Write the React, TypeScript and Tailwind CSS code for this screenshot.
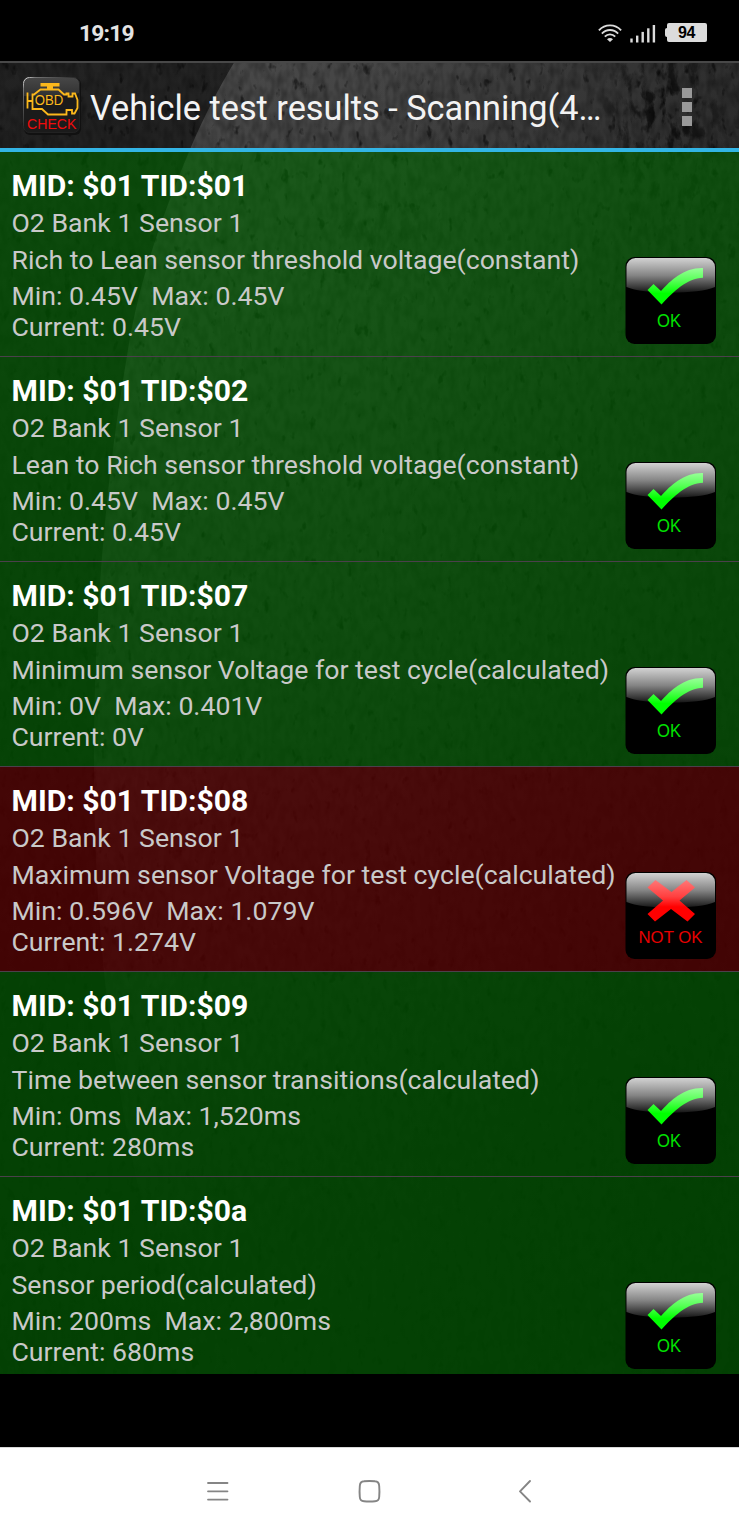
import React from "react";
import clsx from "clsx";

type TestResult = {
  tid: string;
  description: string;
  min: string;
  max: string;
  current: string;
  ok: boolean;
};

const results: TestResult[] = [
  { tid: "$01", description: "Rich to Lean sensor threshold voltage(constant)", min: "0.45V", max: "0.45V", current: "0.45V", ok: true },
  { tid: "$02", description: "Lean to Rich sensor threshold voltage(constant)", min: "0.45V", max: "0.45V", current: "0.45V", ok: true },
  { tid: "$07", description: "Minimum sensor Voltage for test cycle(calculated)", min: "0V", max: "0.401V", current: "0V", ok: true },
  { tid: "$08", description: "Maximum sensor Voltage for test cycle(calculated)", min: "0.596V", max: "1.079V", current: "1.274V", ok: false },
  { tid: "$09", description: "Time between sensor transitions(calculated)", min: "0ms", max: "1,520ms", current: "280ms", ok: true },
  { tid: "$0a", description: "Sensor period(calculated)", min: "200ms", max: "2,800ms", current: "680ms", ok: true },
];

// Worn metal wallpaper behind the action bar and the list
function Wallpaper() {
  return (
    <svg className="absolute inset-0 h-full w-full" viewBox="0 0 739 1313" preserveAspectRatio="none" aria-hidden="true">
      <defs>
        <linearGradient id="wall-dark" x1="0" y1="0" x2="0" y2="1">
          <stop offset="0" stopColor="#232323" />
          <stop offset="0.35" stopColor="#181818" />
          <stop offset="0.7" stopColor="#0d0d0d" />
          <stop offset="1" stopColor="#0b0b0b" />
        </linearGradient>
        <linearGradient id="wall-light" x1="0.2" y1="0" x2="0.35" y2="1">
          <stop offset="0" stopColor="#484848" />
          <stop offset="0.2" stopColor="#3c3c3c" />
          <stop offset="0.42" stopColor="#2a2a2a" />
          <stop offset="0.65" stopColor="#1a1a1a" />
          <stop offset="0.85" stopColor="#0f0f0f" />
          <stop offset="1" stopColor="#0c0c0c" />
        </linearGradient>
        <linearGradient id="wall-side" x1="0" y1="0" x2="1" y2="0">
          <stop offset="0.5" stopColor="#000" stopOpacity="0" />
          <stop offset="1" stopColor="#000" stopOpacity="0.3" />
        </linearGradient>
        <radialGradient id="wall-fade">
          <stop offset="0" stopColor="#fff" />
          <stop offset="1" stopColor="#fff" stopOpacity="0" />
        </radialGradient>
        <mask id="wall-patch">
          <ellipse cx="665" cy="50" rx="80" ry="120" fill="url(#wall-fade)" />
          <ellipse cx="690" cy="180" rx="110" ry="110" fill="url(#wall-fade)" opacity="0.4" />
          <ellipse cx="380" cy="170" rx="90" ry="90" fill="url(#wall-fade)" opacity="0.4" />
        </mask>
        <filter id="wall-specks" x="0" y="0" width="100%" height="100%">
          <feTurbulence type="fractalNoise" baseFrequency="0.11 0.065" numOctaves="3" seed="8" />
          <feColorMatrix values="0 0 0 0 0  0 0 0 0 0  0 0 0 0 0  6 0 0 0 -4" />
        </filter>
        <filter id="wall-grime" x="0" y="0" width="100%" height="100%">
          <feTurbulence type="fractalNoise" baseFrequency="0.09 0.05" numOctaves="4" seed="3" />
          <feColorMatrix values="0 0 0 0 0  0 0 0 0 0  0 0 0 0 0  5 0 0 0 -2.5" />
        </filter>
        <filter id="wall-grain" x="0" y="0" width="100%" height="100%">
          <feTurbulence type="fractalNoise" baseFrequency="0.14 0.07" numOctaves="2" seed="5" />
          <feColorMatrix values="0 0 0 0 0  0 0 0 0 0  0 0 0 0 0  1 0 0 0 -0.35" />
        </filter>
      </defs>
      <rect width="739" height="1313" fill="url(#wall-dark)" />
      <path
        d="M235 0C218 28 204 56 191 86C158 164 137 228 127 295C108 405 94 540 94 705C94 910 122 1110 190 1313H739V0Z"
        fill="url(#wall-light)"
      />
      <rect width="739" height="1313" fill="url(#wall-side)" />
      <rect width="739" height="1313" filter="url(#wall-grain)" opacity="0.6" />
      <rect width="739" height="1313" filter="url(#wall-specks)" opacity="0.5" />
      <g mask="url(#wall-patch)">
        <rect width="739" height="420" filter="url(#wall-grime)" opacity="0.8" />
      </g>
    </svg>
  );
}

function StatusBar() {
  return (
    <div className="flex h-[61px] items-center justify-between bg-black pt-[5px] pr-[32px] pl-[79px] text-[#e4e4e4]">
      <span className="pt-[2px] text-[22.8px] leading-[28px] font-bold tracking-[-0.8px]">19:19</span>
      <div className="flex items-center">
        <svg width="24" height="19" viewBox="0 0 24 19" fill="none" stroke="#dcdcdc" strokeWidth="1.9">
          <path d="M0.9 6.3C7 -0.3 17 -0.3 23.1 6.3" />
          <path d="M3.9 9.6C8.4 4.8 15.6 4.8 20.1 9.6" />
          <path d="M6.8 12.7C9.7 9.6 14.3 9.6 17.2 12.7" />
          <path d="M9 15.2C10.7 13.5 13.3 13.5 15 15.2L12 18Z" fill="#dcdcdc" stroke="none" />
        </svg>
        <svg className="ml-[8px]" width="26" height="19" viewBox="0 0 26 19" fill="#dcdcdc">
          <rect x="0.3" y="14.5" width="2.4" height="4" />
          <rect x="6" y="11.6" width="2.4" height="6.9" />
          <rect x="11.5" y="7.9" width="2.4" height="10.6" />
          <rect x="17.1" y="4.3" width="2.4" height="14.2" />
          <rect x="22.7" y="1" width="2.4" height="17.5" />
        </svg>
        <div className="mt-[-2px] ml-[9px] flex items-center">
          <span className="h-[9px] w-[2px] rounded-l-[2px] bg-[#dcdcdc]" />
          <span className="flex h-[19px] w-[40px] items-center justify-center rounded-[2px] bg-[#dcdcdc] pt-[2px] pr-[1px] font-['Liberation_Sans',sans-serif] text-[16px] leading-none font-bold tracking-[-0.3px] text-black">
            94
          </span>
        </div>
      </div>
    </div>
  );
}

function AppLogo() {
  return (
    <svg width="60" height="60" viewBox="0 0 60 60" fill="none">
      <defs>
        <linearGradient id="logo-gloss" x1="0" y1="0" x2="0" y2="1">
          <stop offset="0" stopColor="#474747" />
          <stop offset="1" stopColor="#303030" />
        </linearGradient>
        <linearGradient id="logo-edge" x1="0" y1="0" x2="0.5" y2="0.5">
          <stop offset="0" stopColor="#fff" />
          <stop offset="0.2" stopColor="#777" />
          <stop offset="1" stopColor="#222" />
        </linearGradient>
      </defs>
      <rect x="2" y="2" width="57" height="57" rx="6" fill="#111" />
      <rect x="1.5" y="1.5" width="56" height="55" rx="6" fill="#1b1b1b" />
      <path d="M1.5 20V7.5a6 6 0 0 1 6-6h44a6 6 0 0 1 6 6V17C42 21 18 21 1.5 20Z" fill="url(#logo-gloss)" />
      <rect x="1.5" y="1.5" width="56" height="55" rx="6" stroke="url(#logo-edge)" />
      <path d="M18.5 7H37.5V10.5H31V13H25V10.5H18.5Z" fill="#fbb81c" />
      <path
        d="M5.5 16.5V32.5M5.5 25H10.5M10.5 31.5V18.5H12L18.5 13.5H36.5L42 18.5H44.5V17.5H46.5V20.5H50.5V17.5H53L55.5 24V32L52.5 37.5H50V34H44.5V38.5H26L20 33H10.5V30"
        stroke="#fbb81c"
        strokeWidth="1.8"
      />
      <text x="12.8" y="29.3" fill="#fbb81c" fontFamily="Liberation Sans, sans-serif" fontSize="14.5" textLength="28.5" lengthAdjust="spacingAndGlyphs">
        OBD
      </text>
      <text x="5" y="52.5" fill="#f00c0c" fontFamily="Liberation Sans, sans-serif" fontSize="15.5" textLength="49.5" lengthAdjust="spacingAndGlyphs">
        CHECK
      </text>
    </svg>
  );
}

function ActionBar() {
  return (
    <header className="flex h-[91px] items-center border-t-2 border-b-4 border-t-[#484848] border-b-[#33b5e5] pr-[47px] pl-[22px]">
      <AppLogo />
      <h1 className="ml-[8px] flex-1 pt-[5px] text-[34.3px] leading-[42px] whitespace-nowrap text-[#f3f3f3]">
        Vehicle test results - Scanning(4…
      </h1>
      <button className="mt-[2px] flex flex-col gap-[4px]" aria-label="More options">
        <span className="h-[10px] w-[10px] bg-[#999999]" />
        <span className="h-[10px] w-[10px] bg-[#999999]" />
        <span className="h-[10px] w-[10px] bg-[#999999]" />
      </button>
    </header>
  );
}

function StatusBadge({ ok }: { ok: boolean }) {
  return (
    <svg className="mt-[105px] shrink-0" width="92" height="88" viewBox="0 0 92 88">
      <defs>
        <linearGradient id="badge-gloss" x1="0" y1="0" x2="0" y2="1">
          <stop offset="0" stopColor="#d2d2d2" />
          <stop offset="0.5" stopColor="#858585" />
          <stop offset="1" stopColor="#161616" />
        </linearGradient>
        <linearGradient id="badge-tick" x1="0" y1="0" x2="0" y2="1">
          <stop offset="0" stopColor="#98ff98" />
          <stop offset="0.35" stopColor="#55ff55" />
          <stop offset="0.7" stopColor="#00ff00" />
        </linearGradient>
        <linearGradient id="badge-cross" x1="0" y1="0" x2="0" y2="1">
          <stop offset="0" stopColor="#ff7878" />
          <stop offset="0.4" stopColor="#ff4040" />
          <stop offset="0.65" stopColor="#ff0000" />
        </linearGradient>
      </defs>
      <rect x="0.5" y="0" width="90.5" height="87" rx="9" fill="#000" />
      <path d="M1.5 30V10a9 9 0 0 1 9-9H81a9 9 0 0 1 9 9V30C74 37.5 18 37.5 1.5 30Z" fill="url(#badge-gloss)" />
      {ok ? (
        <>
          <path d="M22.5 33L28.5 27L36 34C46 23 59 10.5 78 11V20.8C62 21.5 49 34 36.5 47.5Z" fill="url(#badge-tick)" />
          <text x="32" y="70" fill="#00e400" fontFamily="Liberation Sans, sans-serif" fontSize="17.5" textLength="24" lengthAdjust="spacingAndGlyphs">
            OK
          </text>
        </>
      ) : (
        <>
          <path d="M22.5 15.5L30.5 8L46.5 20L61.5 8L70 15.5L54.5 28.5L70 42L62.5 49.5L46 37L30 49.5L22.5 42L38 28.5Z" fill="url(#badge-cross)" />
          <text x="13.5" y="71" fill="#e80000" fontFamily="Liberation Sans, sans-serif" fontSize="17" textLength="64" lengthAdjust="spacingAndGlyphs">
            NOT OK
          </text>
        </>
      )}
    </svg>
  );
}

function ResultRow({ item }: { item: TestResult }) {
  return (
    <li
      className={clsx(
        "flex h-[205px] shrink-0 justify-between border-b border-b-[#4b404b] bg-clip-padding pr-[22px] pl-[11.5px]",
        item.ok ? "bg-[#006600]/60" : "bg-[#680000]/60",
      )}
    >
      <div className="w-0 pt-[16px] text-[26.68px] leading-[31px] whitespace-pre text-[#c9c9c9]">
        <h2 className="text-[30.15px] leading-[35px] font-bold text-white">MID: $01 TID:{item.tid}</h2>
        <p className="mt-[5px]">O2 Bank 1 Sensor 1</p>
        <p className="mt-[6px]">{item.description}</p>
        <p className="mt-[5px]">{`Min: ${item.min}  Max: ${item.max}`}</p>
        <p>Current: {item.current}</p>
      </div>
      <StatusBadge ok={item.ok} />
    </li>
  );
}

function NavBar() {
  return (
    <nav className="flex h-[89px] items-center border-t border-t-[#d8d8d8] bg-white pb-[2px] pl-[206px]">
      <svg width="24" height="24" viewBox="0 0 24 24" stroke="#858585" strokeWidth="1.8" strokeLinecap="round">
        <path d="M2 4H21.5M2 12.3H21.5M2 20.6H21.5" />
      </svg>
      <svg className="ml-[127px]" width="24" height="24" viewBox="0 0 24 24" fill="none" stroke="#858585" strokeWidth="1.9">
        <path d="M7 2.3Q12.5 1.7 18 2.3Q22 2.5 22.2 7Q22.7 12.5 22.2 18Q22 22 18 22.2Q12.5 22.8 7 22.2Q3 22 2.8 18Q2.3 12.5 2.8 7Q3 2.5 7 2.3Z" />
      </svg>
      <svg className="ml-[132px]" width="24" height="24" viewBox="0 0 24 24" fill="none" stroke="#858585" strokeWidth="1.9" strokeLinecap="round" strokeLinejoin="round">
        <path d="M17 2L7 12.3L17 22.5" />
      </svg>
    </nav>
  );
}

export default function App() {
  return (
    <div className="flex h-[1536px] w-[739px] flex-col overflow-hidden bg-black font-[Roboto,sans-serif]">
      <StatusBar />
      <main className="relative h-[1313px] overflow-hidden">
        <Wallpaper />
        <div className="relative">
          <ActionBar />
          <ul className="flex h-[1222px] flex-col overflow-hidden">
            {results.map((item) => (
              <ResultRow key={item.tid} item={item} />
            ))}
          </ul>
        </div>
      </main>
      <div className="h-[73px] bg-black" />
      <NavBar />
    </div>
  );
}
